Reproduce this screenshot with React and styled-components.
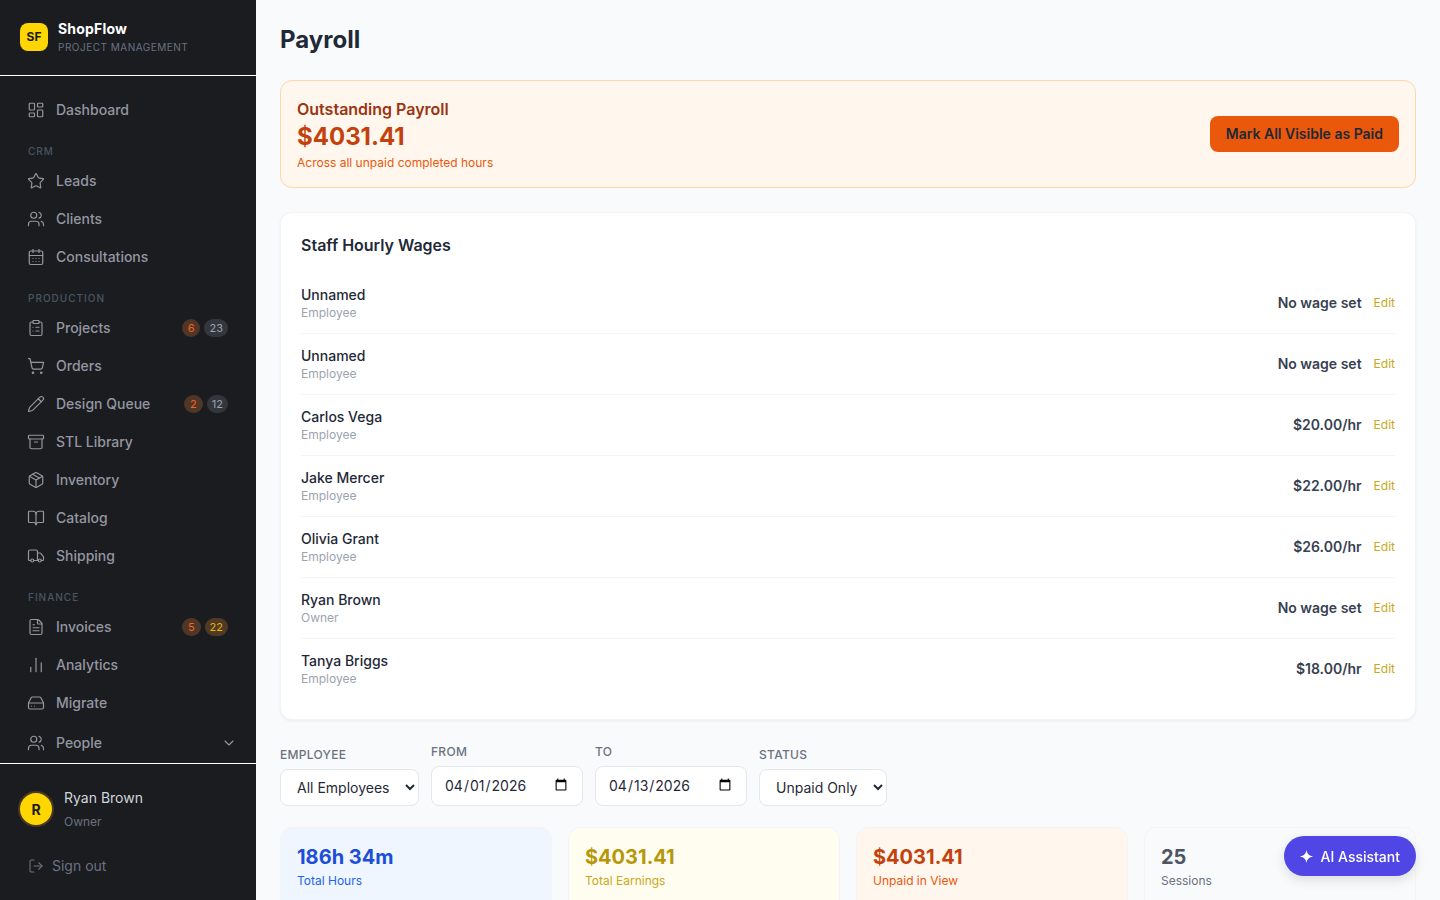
import React from "react";
import styled, { createGlobalStyle } from "styled-components";
import {
  LayoutDashboard,
  Star,
  Users,
  CalendarDays,
  ClipboardList,
  ShoppingCart,
  Pencil,
  Archive,
  Package,
  BookOpen,
  Truck,
  FileText,
  ChartNoAxesColumn,
  HardDrive,
  ChevronDown,
  LogOut,
} from "lucide-react";

const navGroups = [
  { items: [{ label: "Dashboard", icon: LayoutDashboard }] },
  {
    title: "CRM",
    items: [
      { label: "Leads", icon: Star },
      { label: "Clients", icon: Users },
      { label: "Consultations", icon: CalendarDays },
    ],
  },
  {
    title: "PRODUCTION",
    items: [
      { label: "Projects", icon: ClipboardList, alert: 6, count: 23 },
      { label: "Orders", icon: ShoppingCart },
      { label: "Design Queue", icon: Pencil, alert: 2, count: 12 },
      { label: "STL Library", icon: Archive },
      { label: "Inventory", icon: Package },
      { label: "Catalog", icon: BookOpen },
      { label: "Shipping", icon: Truck },
    ],
  },
  {
    title: "FINANCE",
    items: [
      { label: "Invoices", icon: FileText, alert: 5, count: 22, warm: true },
      { label: "Analytics", icon: ChartNoAxesColumn },
      { label: "Migrate", icon: HardDrive },
    ],
  },
];

const staff = [
  { name: "Unnamed", role: "Employee", wage: "No wage set" },
  { name: "Unnamed", role: "Employee", wage: "No wage set" },
  { name: "Carlos Vega", role: "Employee", wage: "$20.00/hr" },
  { name: "Jake Mercer", role: "Employee", wage: "$22.00/hr" },
  { name: "Olivia Grant", role: "Employee", wage: "$26.00/hr" },
  { name: "Ryan Brown", role: "Owner", wage: "No wage set" },
  { name: "Tanya Briggs", role: "Employee", wage: "$18.00/hr" },
];

const stats = [
  { value: "186h 34m", label: "Total Hours", bg: "#eff6ff", fg: "#1d4ed8", sub: "#2563eb" },
  { value: "$4031.41", label: "Total Earnings", bg: "#fefdf0", fg: "#b8960a", sub: "#c9a820" },
  { value: "$4031.41", label: "Unpaid in View", bg: "#fff7ed", fg: "#c2410c", sub: "#ea580c" },
  { value: "25", label: "Sessions", bg: "#f9fafb", fg: "#4b5563", sub: "#6b7280" },
];

const App = () => {
  return (
    <Shell>
      <GlobalStyle />
      <Sidebar>
        <Brand>
          <LogoMark>SF</LogoMark>
          <div>
            <BrandName>ShopFlow</BrandName>
            <BrandSub>PROJECT MANAGEMENT</BrandSub>
          </div>
        </Brand>
        <Nav>
          {navGroups.map((group, i) => (
            <div key={i}>
              {group.title && <GroupTitle>{group.title}</GroupTitle>}
              {group.items.map((item) => (
                <NavRow key={item.label}>
                  <item.icon size={18} strokeWidth={1.6} />
                  <NavLabel>{item.label}</NavLabel>
                  {item.alert && <AlertBadge>{item.alert}</AlertBadge>}
                  {item.count && <CountBadge $warm={item.warm}>{item.count}</CountBadge>}
                </NavRow>
              ))}
            </div>
          ))}
          <PeopleRow>
            <Users size={18} strokeWidth={1.6} />
            <NavLabel>People</NavLabel>
            <ChevronDown size={16} strokeWidth={1.6} />
          </PeopleRow>
        </Nav>
        <SideFooter>
          <UserRow>
            <Avatar>R</Avatar>
            <div>
              <UserName>Ryan Brown</UserName>
              <UserRole>Owner</UserRole>
            </div>
          </UserRow>
          <SignOut>
            <LogOut size={16} strokeWidth={1.6} />
            Sign out
          </SignOut>
        </SideFooter>
      </Sidebar>

      <Main>
        <PageTitle>Payroll</PageTitle>

        <Banner>
          <div>
            <BannerTitle>Outstanding Payroll</BannerTitle>
            <BannerValue>$4031.41</BannerValue>
            <BannerSub>Across all unpaid completed hours</BannerSub>
          </div>
          <PayButton>Mark All Visible as Paid</PayButton>
        </Banner>

        <WageCard>
          <CardTitle>Staff Hourly Wages</CardTitle>
          {staff.map((person, i) => (
            <WageRow key={i}>
              <PersonInfo>
                <PersonName>{person.name}</PersonName>
                <PersonRole>{person.role}</PersonRole>
              </PersonInfo>
              <WageSide>
                <WageValue>{person.wage}</WageValue>
                <EditLink>Edit</EditLink>
              </WageSide>
            </WageRow>
          ))}
        </WageCard>

        <Filters>
          <Field>
            <FieldLabel>Employee</FieldLabel>
            <Select defaultValue="all">
              <option value="all">All Employees</option>
            </Select>
          </Field>
          <Field>
            <FieldLabel>From</FieldLabel>
            <DateInput type="date" defaultValue="2026-04-01" />
          </Field>
          <Field>
            <FieldLabel>To</FieldLabel>
            <DateInput type="date" defaultValue="2026-04-13" />
          </Field>
          <Field>
            <FieldLabel>Status</FieldLabel>
            <Select defaultValue="unpaid">
              <option value="unpaid">Unpaid Only</option>
            </Select>
          </Field>
        </Filters>

        <StatGrid>
          {stats.map((stat) => (
            <StatCard key={stat.label} $bg={stat.bg}>
              <StatValue $color={stat.fg}>{stat.value}</StatValue>
              <StatLabel $color={stat.sub}>{stat.label}</StatLabel>
            </StatCard>
          ))}
        </StatGrid>
      </Main>

      <AssistantButton>
        <svg width="13" height="13" viewBox="0 0 12 12" fill="currentColor">
          <path d="M6 0 C6.6 3.4 8 5.2 12 6 C8 6.8 6.6 8.6 6 12 C5.4 8.6 4 6.8 0 6 C4 5.2 5.4 3.4 6 0 Z" />
        </svg>
        AI Assistant
      </AssistantButton>
    </Shell>
  );
};
export default App;

const GlobalStyle = createGlobalStyle`
  * {
    box-sizing: border-box;
  }
  html, body {
    margin: 0;
    height: 100%;
    overflow: hidden;
  }
  body {
    font-family: Inter, "Liberation Sans", sans-serif;
    background: #f9fafb;
  }
`;

const Shell = styled.div`
  display: flex;
  height: 100vh;
`;

const Sidebar = styled.aside`
  display: flex;
  flex-direction: column;
  flex: 0 0 256px;
  background: #1a1c20;
`;

const Brand = styled.div`
  display: flex;
  align-items: center;
  gap: 10px;
  height: 76px;
  padding: 0 20px 2px;
  border-bottom: 1px solid #ffffff;
`;

const LogoMark = styled.div`
  display: flex;
  align-items: center;
  justify-content: center;
  width: 28px;
  height: 28px;
  border-radius: 8px;
  background: #ffd600;
  color: #1a1c20;
  font-size: 12px;
  font-weight: 700;
`;

const BrandName = styled.div`
  color: #ffffff;
  font-size: 14px;
  font-weight: 700;
  line-height: 20px;
  letter-spacing: 0.2px;
`;

const BrandSub = styled.div`
  color: #6b7280;
  font-size: 10px;
  line-height: 16px;
  letter-spacing: 0.5px;
`;

const Nav = styled.nav`
  flex: 1;
  min-height: 0;
  padding-top: 15px;
  overflow: hidden;
`;

const GroupTitle = styled.div`
  margin: 14px 28px 3px;
  color: #4b5563;
  font-size: 10px;
  font-weight: 500;
  line-height: 16px;
  letter-spacing: 1px;
`;

const NavRow = styled.div`
  display: flex;
  align-items: center;
  gap: 11px;
  height: 38px;
  padding: 0 28px 0 27px;
  color: #9496a0;
  svg {
    flex: none;
  }
`;

const PeopleRow = styled(NavRow)`
  margin-top: 2px;
  padding-right: 19px;
`;

const NavLabel = styled.span`
  flex: 1;
  font-size: 14px;
  font-weight: 500;
  line-height: 22px;
`;

const AlertBadge = styled.span`
  margin-right: -7px;
  padding: 0 6px;
  border-radius: 9px;
  background: #503626;
  color: #f26522;
  font-size: 11px;
  line-height: 18px;
`;

const CountBadge = styled.span`
  padding: 0 5px;
  border-radius: 9px;
  background: ${(props) => (props.$warm ? "#4f3a24" : "#33373d")};
  color: ${(props) => (props.$warm ? "#eab308" : "#9ca3af")};
  font-size: 11px;
  line-height: 18px;
`;

const SideFooter = styled.div`
  flex: 0 0 137px;
  padding: 23px 20px 0;
  border-top: 1px solid #ffffff;
`;

const UserRow = styled.div`
  display: flex;
  align-items: center;
  gap: 12px;
`;

const Avatar = styled.div`
  display: flex;
  align-items: center;
  justify-content: center;
  width: 32px;
  height: 32px;
  border-radius: 50%;
  background: #ffd600;
  box-shadow: 0 0 0 2px #4a3a24;
  color: #1a1c20;
  font-size: 14px;
  font-weight: 700;
`;

const UserName = styled.div`
  color: #d1d5db;
  font-size: 14px;
  line-height: 22px;
`;

const UserRole = styled.div`
  margin-top: 4px;
  color: #6b7280;
  font-size: 12px;
  line-height: 18px;
`;

const SignOut = styled.div`
  display: flex;
  align-items: center;
  gap: 8px;
  margin: 24px 0 0 8px;
  color: #6b7280;
  font-size: 14px;
  line-height: 22px;
`;

const Main = styled.main`
  flex: 1;
  min-width: 0;
  padding: 24px;
  overflow: hidden;
`;

const PageTitle = styled.h1`
  margin: 0 0 24px;
  color: #1f2937;
  font-size: 24px;
  font-weight: 700;
  line-height: 32px;
`;

const Banner = styled.section`
  display: flex;
  align-items: center;
  justify-content: space-between;
  height: 108px;
  padding: 0 16px;
  border: 1px solid #fed7aa;
  border-radius: 12px;
  background: #fff7ed;
`;

const BannerTitle = styled.div`
  padding-top: 1px;
  color: #9a3412;
  font-size: 16px;
  font-weight: 600;
  line-height: 24px;
`;

const BannerValue = styled.div`
  margin-top: 1px;
  color: #c2410c;
  font-size: 24px;
  font-weight: 700;
  line-height: 30px;
`;

const BannerSub = styled.div`
  margin-top: 2px;
  color: #ea580c;
  font-size: 12px;
  line-height: 18px;
`;

const PayButton = styled.button`
  height: 36px;
  padding: 0 16px 1px;
  border: 0;
  border-radius: 8px;
  background: #ea580c;
  color: #1f2937;
  font-family: inherit;
  font-size: 14px;
  font-weight: 600;
`;

const WageCard = styled.section`
  margin-top: 24px;
  padding: 20px 20px 19px;
  border: 1px solid #f3f4f6;
  border-radius: 12px;
  background: #ffffff;
  box-shadow: 0 1px 3px rgba(0, 0, 0, 0.06);
`;

const CardTitle = styled.h2`
  margin: 0 0 16px;
  color: #1f2937;
  font-size: 16px;
  font-weight: 600;
  line-height: 24px;
`;

const WageRow = styled.div`
  display: flex;
  align-items: center;
  justify-content: space-between;
  height: 61px;
  border-bottom: 1px solid #f3f4f6;
  &:last-child {
    border-bottom-color: transparent;
  }
`;

const PersonInfo = styled.div`
  padding-top: 2px;
`;

const PersonName = styled.div`
  color: #1f2937;
  font-size: 14px;
  font-weight: 500;
  line-height: 18px;
`;

const PersonRole = styled.div`
  color: #9ca3af;
  font-size: 12px;
  line-height: 18px;
`;

const WageSide = styled.div`
  display: flex;
  align-items: center;
  gap: 12px;
  padding-bottom: 2px;
`;

const WageValue = styled.span`
  color: #374151;
  font-size: 14px;
  font-weight: 600;
`;

const EditLink = styled.span`
  color: #c9a820;
  font-size: 12px;
`;

const Filters = styled.div`
  display: flex;
  align-items: flex-end;
  gap: 12px;
  margin-top: 24px;
`;

const Field = styled.label`
  display: flex;
  flex-direction: column;
  gap: 6px;
`;

const FieldLabel = styled.span`
  color: #6b7280;
  font-size: 12px;
  font-weight: 500;
  line-height: 16px;
  letter-spacing: 0.3px;
  text-transform: uppercase;
`;

const Select = styled.select`
  height: 37px;
  padding: 0 12px;
  border: 1px solid #e5e7eb;
  border-radius: 8px;
  background: #ffffff;
  color: #1f2937;
  font-family: inherit;
  font-size: 14px;
`;

const DateInput = styled.input`
  width: 152px;
  height: 40px;
  padding: 0 12px 2px;
  border: 1px solid #e5e7eb;
  border-radius: 8px;
  background: #ffffff;
  color: #1f2937;
  font-family: inherit;
  font-size: 14px;
`;

const StatGrid = styled.div`
  display: grid;
  grid-template-columns: repeat(4, 1fr);
  gap: 16px;
  margin-top: 21px;
`;

const StatCard = styled.div`
  height: 90px;
  padding: 15px 16px 16px;
  border: 1px solid #f3f4f6;
  border-radius: 12px;
  background: ${(props) => props.$bg};
`;

const StatValue = styled.div`
  color: ${(props) => props.$color};
  font-size: 20px;
  font-weight: 700;
  line-height: 28px;
`;

const StatLabel = styled.div`
  margin-top: 1px;
  color: ${(props) => props.$color};
  font-size: 12px;
  line-height: 18px;
`;

const AssistantButton = styled.button`
  position: fixed;
  right: 24px;
  bottom: 24px;
  display: flex;
  align-items: center;
  gap: 8px;
  height: 40px;
  padding: 0 16px;
  border: 0;
  border-radius: 20px;
  background: #4f46e5;
  box-shadow: 0 4px 12px rgba(0, 0, 0, 0.12);
  color: #ffffff;
  font-family: inherit;
  font-size: 14px;
  font-weight: 500;
`;
